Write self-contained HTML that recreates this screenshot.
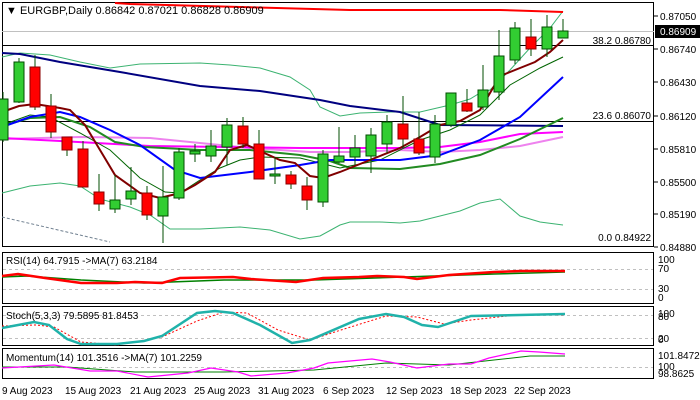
<!DOCTYPE html>
<html><head><meta charset="utf-8"><style>
html,body{margin:0;padding:0;background:#fff;}
svg{display:block;font-family:"Liberation Sans",sans-serif;}
</style></head><body>
<svg width="700" height="400" viewBox="0 0 700 400" xmlns="http://www.w3.org/2000/svg">
<rect width="700" height="400" fill="#fff"/>
<!-- main panel -->
<rect x="2.5" y="2.5" width="651" height="244" fill="none" stroke="#000"/>
<line x1="2" y1="31.5" x2="654" y2="31.5" stroke="#c0c0c0"/>
<line x1="2" y1="45.5" x2="654" y2="45.5" stroke="#000"/>
<line x1="2" y1="121.5" x2="654" y2="121.5" stroke="#000"/>
<polyline fill="none" stroke="#708090" stroke-dasharray="3,2" points="2,217 110,242"/>
<!-- bollinger -->
<g fill="none" stroke="#3cb371" stroke-width="1">
<polyline points="2,57 20,53 50,55 80,62 110,68 140,64 200,63 230,65 260,68 290,77 310,90 320,107 340,116 360,113 390,112 420,112 450,105 470,99 480,93 490,90 510,70 530,48 550,28 563,11"/>
<polyline points="2,193 30,186 60,183 80,186 100,199 130,207 150,215 170,229 200,229 240,227 270,230 300,239 320,236 340,225 350,222 380,222 400,223 420,221 440,216 460,211 480,203 500,199 520,216 540,222 563,225"/>
</g>
<polyline fill="none" stroke="#ff0000" stroke-width="2" points="115,3 130,4 240,7 350,10 500,10 563,12"/>
<polyline fill="none" stroke="#000080" stroke-width="2" points="2,53 20,54 60,62 120,72 200,86 260,91 320,100 350,106 400,112 440,125 563,126"/>
<polyline fill="none" stroke="#ee82ee" stroke-width="2" points="2,139 80,137 150,138 250,148 310,152 350,152 400,150 440,152 480,150 520,146 563,137"/>
<polyline fill="none" stroke="#ff00ff" stroke-width="2" points="2,138 60,141 150,146 300,148 350,148 400,148 440,147 480,142 520,134 563,132"/>
<polyline fill="none" stroke="#228b22" stroke-width="2" points="2,126 30,118 60,117 90,127 115,142 145,147 200,150 250,150 300,155 330,161 350,168 400,169 440,164 480,155 520,139 563,118"/>
<polyline fill="none" stroke="#006400" stroke-width="1" points="2,125 30,115 50,117 80,133 110,150 140,178 165,192 180,193 200,180 220,168 240,160 260,157 300,158 340,168 380,160 420,140 450,130 480,115 510,85 540,68 563,57"/>
<polyline fill="none" stroke="#0000ff" stroke-width="2" points="2,127 30,117 60,112 80,117 110,130 140,145 175,170 200,178 250,172 300,165 330,160 350,160 400,160 440,155 480,140 520,117 563,77"/>
<polyline fill="none" stroke="#800000" stroke-width="2" points="2,112 19,106 35,104 60,108 70,110 85,125 100,150 115,175 140,193 160,198 180,193 195,185 215,172 230,150 247,145 262,152 280,160 295,163 310,176 323,178 340,172 360,164 380,156 400,148 420,137 440,125 460,121 480,110 500,76 520,68 535,62 550,52 563,40"/>
<!-- candles -->
<g stroke="#004d00" stroke-width="1">
<line x1="19" y1="58" x2="19" y2="103"/><line x1="35" y1="55" x2="35" y2="110"/><line x1="51" y1="94" x2="51" y2="138"/><line x1="67" y1="137" x2="67" y2="156"/><line x1="83" y1="141" x2="83" y2="187"/><line x1="99" y1="174" x2="99" y2="211"/><line x1="115" y1="175" x2="115" y2="213"/><line x1="131" y1="167" x2="131" y2="205"/><line x1="147" y1="186" x2="147" y2="220"/><line x1="163" y1="166" x2="163" y2="243"/><line x1="179" y1="148" x2="179" y2="200"/><line x1="195" y1="144" x2="195" y2="162"/><line x1="211" y1="130" x2="211" y2="162"/><line x1="227" y1="118" x2="227" y2="165"/><line x1="243" y1="117" x2="243" y2="148"/><line x1="259" y1="130" x2="259" y2="179"/><line x1="275" y1="157" x2="275" y2="184"/><line x1="291" y1="171" x2="291" y2="189"/><line x1="307" y1="177" x2="307" y2="210"/><line x1="323" y1="150" x2="323" y2="207"/><line x1="339" y1="127" x2="339" y2="163"/><line x1="355" y1="135" x2="355" y2="165"/><line x1="371" y1="128" x2="371" y2="173"/><line x1="387" y1="115" x2="387" y2="153"/><line x1="403" y1="96" x2="403" y2="148"/><line x1="419" y1="112" x2="419" y2="155"/><line x1="435" y1="115" x2="435" y2="163"/><line x1="451" y1="93" x2="451" y2="127"/><line x1="467" y1="89" x2="467" y2="112"/><line x1="483" y1="65" x2="483" y2="110"/><line x1="499" y1="30" x2="499" y2="100"/><line x1="515" y1="22" x2="515" y2="64"/><line x1="531" y1="19" x2="531" y2="56"/><line x1="547" y1="15" x2="547" y2="57"/><line x1="563" y1="19" x2="563" y2="38"/><line x1="3" y1="92" x2="3" y2="142"/>
</g>
<g fill="#32cd32" stroke="#004d00">
<rect x="-2" y="99" width="10" height="41"/>
<rect x="14" y="62" width="10" height="40"/><rect x="110" y="200" width="10" height="9"/><rect x="126" y="191" width="10" height="8"/><rect x="158" y="197" width="10" height="19"/><rect x="174" y="152" width="10" height="46"/><rect x="190" y="151" width="10" height="3"/><rect x="206" y="146" width="10" height="10"/><rect x="222" y="125" width="10" height="22"/><rect x="270" y="174" width="10" height="2"/><rect x="318" y="154" width="10" height="48"/><rect x="334" y="156" width="10" height="6"/><rect x="350" y="148" width="10" height="9"/><rect x="366" y="135" width="10" height="21"/><rect x="382" y="122" width="10" height="22"/><rect x="430" y="124" width="10" height="33"/><rect x="446" y="93" width="10" height="32"/><rect x="478" y="90" width="10" height="17"/><rect x="494" y="56" width="10" height="36"/><rect x="510" y="28" width="10" height="32"/><rect x="542" y="27" width="10" height="22"/><rect x="558" y="31" width="10" height="7"/>
</g>
<g fill="#ff0000" stroke="#8b0000">
<rect x="30" y="67" width="10" height="40"/><rect x="46" y="106" width="10" height="26"/><rect x="62" y="137" width="10" height="13"/><rect x="78" y="149" width="10" height="38"/><rect x="94" y="192" width="10" height="12"/><rect x="142" y="193" width="10" height="22"/><rect x="238" y="126" width="10" height="18"/><rect x="254" y="144" width="10" height="35"/><rect x="286" y="175" width="10" height="9"/><rect x="302" y="186" width="10" height="14"/><rect x="398" y="124" width="10" height="15"/><rect x="414" y="139" width="10" height="14"/><rect x="462" y="103" width="10" height="8"/><rect x="526" y="37" width="10" height="12"/>
</g>
<rect x="2" y="3" width="240" height="14" fill="#fff" opacity="0"/>
<text x="6" y="14" font-size="11" fill="#000">▼ EURGBP,Daily  0.86842 0.87021 0.86828 0.86909</text>
<g font-size="10" fill="#000" text-anchor="end">
<text x="651" y="44">38.2 0.86780</text>
<text x="651" y="119">23.6 0.86070</text>
<text x="651" y="241">0.0 0.84922</text>
</g>
<!-- axis -->
<g font-size="10" fill="#000">
<g stroke="#000"><line x1="654" y1="16" x2="658" y2="16"/><line x1="654" y1="49" x2="658" y2="49"/><line x1="654" y1="82" x2="658" y2="82"/><line x1="654" y1="116" x2="658" y2="116"/><line x1="654" y1="149" x2="658" y2="149"/><line x1="654" y1="182" x2="658" y2="182"/><line x1="654" y1="214" x2="658" y2="214"/><line x1="654" y1="247" x2="658" y2="247"/></g>
<text x="660" y="20">0.87050</text>
<rect x="655" y="25" width="45" height="13" fill="#000"/>
<text x="660" y="35" fill="#fff">0.86909</text>
<text x="660" y="53">0.86740</text>
<text x="660" y="86">0.86430</text>
<text x="660" y="120">0.86120</text>
<text x="660" y="153">0.85810</text>
<text x="660" y="186">0.85500</text>
<text x="660" y="218">0.85190</text>
<text x="660" y="251">0.84880</text>
</g>
<!-- RSI -->
<rect x="2.5" y="252.5" width="651" height="51" fill="none" stroke="#000"/>
<g stroke="#c0c0c0" stroke-dasharray="3,3"><line x1="3" y1="269.5" x2="653" y2="269.5"/><line x1="3" y1="289.5" x2="653" y2="289.5"/></g>
<polyline fill="none" stroke="#008000" stroke-width="1.5" points="2,277 27,276 81,280 144,283 224,280 314,280 404,277 494,274 565,272"/>
<polyline fill="none" stroke="#ff0000" stroke-width="2.5" points="2,276 18,274 45,278 81,283 117,283 135,282 162,283 180,278 233,277 251,279 296,282 323,278 359,277 377,276 404,277 417,279 449,275 494,272 521,271 565,271"/>
<text x="6" y="264" font-size="10">RSI(14) 64.7915  -&gt;MA(7) 63.2184</text>
<g font-size="10"><text x="658" y="263">100</text><text x="658" y="272">70</text><text x="658" y="292">30</text><text x="658" y="301">0</text></g>
<!-- Stoch -->
<rect x="2.5" y="306.5" width="651" height="39" fill="none" stroke="#000"/>
<g stroke="#c0c0c0" stroke-dasharray="3,3"><line x1="3" y1="315.5" x2="653" y2="315.5"/><line x1="3" y1="338.5" x2="653" y2="338.5"/></g>
<polyline fill="none" stroke="#ff0000" stroke-width="1" stroke-dasharray="2,2" points="2,326 36,325 54,327 81,342 117,345 162,337 197,321 224,312 247,313 278,330 310,340 341,330 386,316 417,317 444,324 471,320 516,315 565,315"/>
<polyline fill="none" stroke="#20b2aa" stroke-width="2.5" points="2,328 34,322 49,325 67,339 81,344 117,344 144,341 162,336 197,313 215,311 233,313 260,325 292,343 310,340 359,319 386,314 404,317 422,325 438,327 471,316 565,314"/>
<text x="6" y="319" font-size="10">Stoch(5,3,3) 79.5895 81.8453</text>
<g font-size="10"><text x="658" y="317">100</text><text x="658" y="320">80</text><text x="658" y="342">20</text><text x="658" y="343">0</text></g>
<!-- Momentum -->
<rect x="2.5" y="348.5" width="651" height="30" fill="none" stroke="#000"/>
<line x1="3" y1="367.5" x2="653" y2="367.5" stroke="#c0c0c0" stroke-dasharray="3,3"/>
<polyline fill="none" stroke="#008000" stroke-width="1" points="2,367 67,367 135,372 224,372 314,370 386,363 449,365 494,360 530,356 565,356"/>
<polyline fill="none" stroke="#ff00ff" stroke-width="1.2" points="2,368 54,365 90,371 117,371 148,377 188,373 211,368 238,372 251,376 287,373 314,368 328,363 372,359 390,362 417,368 449,364 471,364 489,358 521,351 539,352 565,354"/>
<text x="6" y="361" font-size="10">Momentum(14) 101.3516  -&gt;MA(7) 101.2259</text>
<g font-size="10"><text x="658" y="359">101.8472</text><text x="658" y="370">100</text><text x="658" y="377">98.8625</text></g>
<!-- dates -->
<g font-size="10" fill="#000">
<text x="2" y="394">9 Aug 2023</text><text x="65" y="394">15 Aug 2023</text><text x="130" y="394">21 Aug 2023</text><text x="194" y="394">25 Aug 2023</text><text x="258" y="394">31 Aug 2023</text><text x="323" y="394">6 Sep 2023</text><text x="386" y="394">12 Sep 2023</text><text x="450" y="394">18 Sep 2023</text><text x="514" y="394">22 Sep 2023</text>
</g>
</svg>
</body></html>
